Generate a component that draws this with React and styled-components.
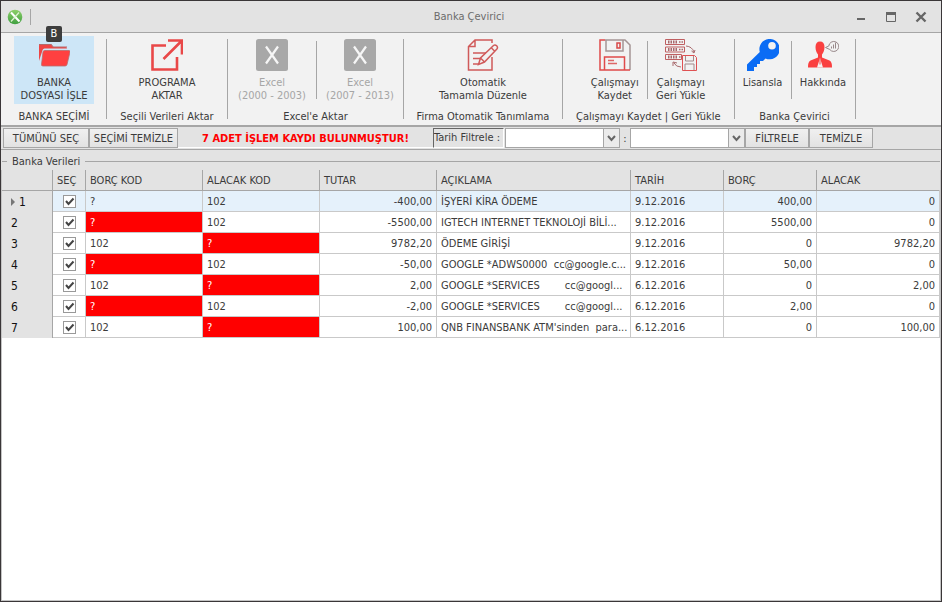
import React from 'react';
import styled, {createGlobalStyle} from 'styled-components';

const colors = {
    frame: '#3a3638',
    chrome: '#e3e3e3',
    ribbon: '#f2f2f2',
    line: '#a6a6a6',
    cell: '#c9c9c9',
    text: '#3b3b3b',
    muted: '#a6a6a6',
    red: '#ff0000',
    selected: '#e5f1fb',
};

const GlobalStyle = createGlobalStyle`
    *, *::before, *::after {
        box-sizing: border-box;
    }

    body {
        margin: 0;
        color: ${colors.text};
        font: 11px/13px 'DejaVu Sans Condensed', 'Noto Sans', sans-serif;
    }

    button, select {
        margin: 0;
        padding: 0;
        color: inherit;
        font: inherit;
    }
`;

const Window = styled.div`
    display: flex;
    flex-direction: column;
    min-height: 100vh;
    background: #fff;
    border: 1px solid ${colors.frame};
`;

const TitleBar = styled.header`
    display: grid;
    grid-template-columns: 1fr auto 1fr;
    align-items: center;
    height: 32px;
    padding: 0 10px 0 6px;
    background: ${colors.chrome};
    border-bottom: 1px solid ${colors.line};
`;

const QuickAccess = styled.div`
    display: flex;
    align-items: center;
    width: 24px;
    height: 16px;
    border-right: 1px solid ${colors.line};
`;

const Title = styled.h1`
    margin: 0;
    color: #6c6c6c;
    font-size: 11px;
    font-weight: normal;
`;

const WindowButtons = styled.div`
    display: flex;
    justify-content: flex-end;
    gap: 18px;
    padding-right: 4px;
`;

const WindowButton = styled.button`
    display: flex;
    width: 12px;
    height: 12px;
    background: none;
    border: 0;
    color: #666;
`;

const Ribbon = styled.nav`
    display: flex;
    height: 94px;
    padding-left: 1px;
    background: ${colors.ribbon};
    border-bottom: 2px solid ${colors.line};
`;

const Group = styled.section`
    display: flex;
    flex-direction: column;
    justify-content: space-between;
    align-items: center;
    padding: 3px ${props => props.$pad || '0'} 2px;
`;

const GroupItems = styled.div`
    display: flex;
`;

const GroupTitle = styled.h2`
    margin: 0;
    font-size: 11px;
    font-weight: normal;
    white-space: nowrap;
`;

const Divider = styled.div`
    width: 1px;
    height: ${props => props.$height};
    margin-top: ${props => props.$top};
    background: ${colors.line};
`;

const RibbonButton = styled.button`
    position: relative;
    display: flex;
    flex-direction: column;
    align-items: center;
    gap: 5px;
    width: ${props => props.$width};
    height: 68px;
    padding-top: 3px;
    background: ${props => props.$active ? '#cde6f7' : 'none'};
    border: 0;
    white-space: pre-line;

    &:disabled {
        color: ${colors.muted};
    }
`;

const KeyTip = styled.kbd`
    position: absolute;
    top: -10px;
    left: 32px;
    width: 16px;
    height: 16px;
    background: #3d3d3d;
    border-radius: 2px;
    color: #fff;
    font: 11px/16px 'DejaVu Sans Condensed', 'Noto Sans', sans-serif;
    text-align: center;
`;

const Toolbar = styled.div`
    display: flex;
    align-items: center;
    height: 23px;
    padding-left: 2px;
    background: ${colors.chrome};
    border-bottom: 1px solid ${colors.line};
`;

const ToolButton = styled.button`
    width: ${props => props.$width};
    height: 20px;
    background: linear-gradient(#f0f0f0, #e2e2e2);
    border: 1px solid ${colors.line};
    white-space: nowrap;
`;

const Status = styled.output`
    width: 255px;
    height: 20px;
    padding-top: 1px;
    border-bottom: 1px solid #fff;
    color: ${colors.red};
    font-weight: bold;
    line-height: 19px;
    text-align: center;
    white-space: nowrap;
`;

const FilterLabel = styled.label`
    width: 71px;
    height: 20px;
    margin-right: 1px;
    border: 1px solid;
    border-color: #666 #fff #fff #666;
    line-height: 18px;
    white-space: nowrap;
`;

const Combo = styled.div`
    display: grid;
    grid-template-columns: 1fr 16px;
    width: 115px;
    height: 20px;
    border: 1px solid ${colors.line};
`;

const Select = styled.select`
    grid-area: 1 / 1 / 2 / 3;
    width: 100%;
    height: 18px;
    appearance: none;
    background: #fff;
    border: 0;
    border-radius: 0;
`;

const ComboArrow = styled.span`
    grid-area: 1 / 2;
    display: grid;
    place-items: center;
    background: #ebebeb;
    border-left: 1px solid ${colors.line};
    pointer-events: none;
`;

const Colon = styled.span`
    width: 10px;
    text-align: center;
`;

const Panel = styled.main`
    flex: 1;
    border: 1px solid #c4c4c4;
    border-top: 0;
`;

const PanelHead = styled.div`
    display: flex;
    align-items: center;
    gap: 5px;
    height: 20px;
    margin: 0 -1px;
    padding: 2px 1px 0;
    background: ${colors.chrome};

    &::before, &::after {
        content: '';
        width: 5px;
        height: 1px;
        background: ${colors.line};
    }

    &::after {
        flex: 1;
    }
`;

const PanelTitle = styled.h2`
    margin: 0;
    font-size: 11px;
    font-weight: normal;
`;

const Table = styled.table`
    width: 100%;
    table-layout: fixed;
    border-collapse: separate;
    border-spacing: 0;
`;

const Th = styled.th`
    width: ${props => props.$width};
    height: 21px;
    padding: 0 4px;
    background: ${colors.chrome};
    border-right: 1px solid ${colors.line};
    border-bottom: 1px solid ${colors.line};
    font-weight: normal;
    text-align: left;

    &:last-child {
        border-right-color: ${colors.chrome};
    }
`;

const RowNumber = styled.th`
    padding: 2px 0 0 9px;
    background: ${colors.chrome};
    border-right: 1px solid ${colors.line};
    color: #111;
    font-size: 12px;
    font-weight: normal;
    text-align: left;
`;

const RowMarker = styled.svg`
    margin-right: 4px;
`;

const Td = styled.td`
    height: 21px;
    padding: 0 ${props => props.$number ? '4px' : '0'} 0 4px;
    overflow: hidden;
    background: ${props => props.$missing ? colors.red : 'transparent'};
    border-right: 1px solid ${colors.cell};
    border-bottom: 1px solid ${colors.cell};
    color: ${props => props.$missing ? '#fff' : 'inherit'};
    text-align: ${props => props.$number ? 'right' : 'left'};
    white-space: pre;
`;

const Row = styled.tr`
    background: ${props => props.$selected ? colors.selected : '#fff'};
`;

const CheckBox = styled.span`
    display: grid;
    width: 13px;
    height: 13px;
    margin-left: 6px;

    input, svg {
        grid-area: 1 / 1;
        width: 13px;
        height: 13px;
        margin: 0;
    }

    input {
        appearance: none;
        background: #fff;
        border: 1px solid #999;
    }

    svg {
        display: none;
        pointer-events: none;
    }

    input:checked + svg {
        display: block;
    }
`;

const LogoIcon = () =>
    <svg width="16" height="16" viewBox="0 0 16 16">
        <defs>
            <linearGradient id="logo" x1="0" y1="0" x2="0" y2="1">
                <stop offset="0" stopColor="#8ed06a" />
                <stop offset="1" stopColor="#3f9f40" />
            </linearGradient>
        </defs>
        <circle cx="8" cy="8" r="7.3" fill="url(#logo)" />
        <path d="M4 3.500l8.500 9" stroke="#fff" strokeWidth="2" />
        <path d="M12 3.500L4 12.500" stroke="#dff2d5" strokeWidth="1.200" />
    </svg>;

const FolderIcon = () =>
    <svg width="32" height="32" viewBox="0 0 32 32">
        <path d="M1 22V6.500Q1 5 2.500 5H12q1.500 0 2 1.500T16 8h11.500Q29 8 29 9.500H6.500Q5 9.500 4.600 11z" fill="#ee4545" />
        <path d="M1 5.500h12.500L15 8h14" fill="none" stroke="#b3696a" />
        <path d="M6.500 11.500H31q1.200 0 1 1.500l-3 12.500q-.4 1.500-2 1.500H5q-1.800 0-1.500-1.500L5 13q.3-1.500 1.500-1.500z" fill="#ff4040" stroke="#b96c6c" strokeWidth=".8" />
    </svg>;

const ExportIcon = () =>
    <svg width="32" height="32" viewBox="0 0 32 32" fill="none" stroke="#e94848" strokeWidth="2.600">
        <path d="M15 6.500H1.500v24H26V18" />
        <path d="M12.500 20L30 2.500M17 1.500h14v14" />
    </svg>;

const ExcelIcon = () =>
    <svg width="32" height="32" viewBox="0 0 32 32">
        <rect width="32" height="32" rx="2.500" fill="#a8a8a8" />
        <path d="M10 7.500l12 17M22 7.500l-12 17" fill="none" stroke="#f6f6f6" strokeWidth="2.200" />
    </svg>;

const EditIcon = () =>
    <svg width="32" height="32" viewBox="0 0 32 32" fill="none" stroke="#d05a5a" strokeWidth="1.500">
        <path d="M25 4V1H8L1.500 7.500V31H25V18M8 1v6.500H1.500" />
        <path d="M6 14h13M6 19.500h8M6 25h6" />
        <path d="M11.500 25.500l2-6.500L26.500 6.500q1.500-1.200 3.200.3 1.500 1.700.2 3.200L17.500 23zM24 8.500l4 4M13.500 19l4 4" />
    </svg>;

const SaveIcon = () =>
    <svg width="32" height="32" viewBox="0 0 32 32" fill="none" stroke="#a59595" strokeWidth="1.500">
        <path d="M31 31V6L26 1H6" />
        <path d="M6 1H1v30h30" stroke="#e04a4a" />
        <path d="M7 1v11h17V1" />
        <path d="M18 4h3v5h-3z" stroke="#d84848" />
        <path d="M5.500 31V18h20v13" stroke="#e04a4a" />
        <path d="M9 21.500h6M9 24.500h9" stroke="#d66" />
    </svg>;

const RestoreIcon = () =>
    <svg width="32" height="32" viewBox="0 0 32 32" fill="none" stroke="#a8696c">
        <path d="M.5.500h19v5H.5zM.5 8h19v5H.5zM.5 15.500h16v5H.5z" stroke="#bf5f61" />
        <path d="M3 3h9M3 10.500h9M3 18h9" strokeWidth="3" strokeDasharray="1.500 1" />
        <path d="M14 3h4M14 10.500h4M14 18h3" strokeWidth="1.500" strokeDasharray="1.500 1" />
        <path d="M21 7q6 .5 8 6M26.500 12l2.500 2 1-3M16 28q-5 0-7-4M8 27v-4l4 1" />
        <path d="M17.500 31.500v-15h12l2 2v13z" stroke="#df5152" />
        <path d="M20.500 17v5h8v-5M20 31v-6h9v6" stroke="#a38a8a" />
    </svg>;

const KeyIcon = () =>
    <svg width="32" height="32" viewBox="0 0 32 32">
        <path d="M21.500 0A10.200 10.200 0 1 1 18.500 19.500L16 22h-3v3h-3v3H7v4H0V25.500L12.800 13A10.200 10.200 0 0 1 21.500 0z" fill="#0a6cf5" />
        <circle cx="25" cy="6.800" r="3.800" fill="#f2f2f2" />
    </svg>;

const AboutIcon = () =>
    <svg width="32" height="32" viewBox="0 0 32 32">
        <path d="M13 2.500c3 0 4.500 2 4.500 5.500 0 3-1 5.500-2.500 7.500v3l7.500 3c2 1 2.500 3 2.500 7H1c0-4 .5-6 2.500-7l7.500-3v-3C9.500 13.500 8.500 11 8.500 8c0-3.500 1.500-5.500 4.500-5.500z" fill="#fa4040" />
        <path d="M13 19l-3 9.500h6z" fill="#f2f2f2" />
        <path d="M13 19.500v6" stroke="#fa6060" strokeWidth="1.200" />
        <path d="M18.500 8.500l3.300-1.500a5 5 0 1 1 1 3.500z" fill="#f2f2f2" stroke="#98888a" />
        <path d="M24.500 9.500v-2M26.500 9.500v-4M28.500 9.500v-6" stroke="#98888a" />
    </svg>;

const ribbonGroups = [
    {title: 'BANKA SEÇİMİ', pad: '12px', items: [
        {label: 'BANKA\nDOSYASI İŞLE', icon: FolderIcon, width: '80px', keyTip: 'B', active: true},
    ]},
    {title: 'Seçili Verileri Aktar', pad: '12px', items: [
        {label: 'PROGRAMA\nAKTAR', icon: ExportIcon, width: '96px'},
    ]},
    {title: 'Excel\'e Aktar', items: [
        {label: 'Excel\n(2000 - 2003)', icon: ExcelIcon, width: '88px', disabled: true},
        {label: 'Excel\n(2007 - 2013)', icon: ExcelIcon, width: '86px', disabled: true},
    ]},
    {title: 'Firma Otomatik Tanımlama', pad: '12px', items: [
        {label: 'Otomatik\nTamamla Düzenle', icon: EditIcon, width: '134px'},
    ]},
    {title: 'Çalışmayı Kaydet | Geri Yükle', pad: '13px', items: [
        {label: 'Çalışmayı\nKaydet', icon: SaveIcon, width: '64px'},
        {label: 'Çalışmayı\nGeri Yükle', icon: RestoreIcon, width: '66px'},
    ]},
    {title: 'Banka Çevirici', items: [
        {label: 'Lisansla', icon: KeyIcon, width: '56px'},
        {label: 'Hakkında', icon: AboutIcon, width: '63px'},
    ]},
];

const columns = [
    {label: 'SEÇ', width: '33px'},
    {label: 'BORÇ KOD', width: '117px'},
    {label: 'ALACAK KOD', width: '117px'},
    {label: 'TUTAR', width: '117px'},
    {label: 'AÇIKLAMA'},
    {label: 'TARİH', width: '93px'},
    {label: 'BORÇ', width: '93px'},
    {label: 'ALACAK', width: '123px'},
];

const records = [
    ['?', '102', '-400,00', 'İŞYERİ KİRA ÖDEME', '9.12.2016', '400,00', '0'],
    ['?', '102', '-5500,00', 'IGTECH INTERNET TEKNOLOJİ BİLİ...', '9.12.2016', '5500,00', '0'],
    ['102', '?', '9782,20', 'ÖDEME GİRİŞİ', '9.12.2016', '0', '9782,20'],
    ['?', '102', '-50,00', 'GOOGLE *ADWS0000  cc@google.c...', '9.12.2016', '50,00', '0'],
    ['102', '?', '2,00', 'GOOGLE *SERVICES        cc@googl...', '6.12.2016', '0', '2,00'],
    ['?', '102', '-2,00', 'GOOGLE *SERVICES        cc@googl...', '6.12.2016', '2,00', '0'],
    ['102', '?', '100,00', 'QNB FINANSBANK ATM\'sinden  para...', '6.12.2016', '0', '100,00'],
];

const RibbonItem = ({item}) => {
    const Icon = item.icon;

    return (
        <RibbonButton type="button" $width={item.width} $active={item.active} disabled={item.disabled}>
            {item.keyTip && <KeyTip>{item.keyTip}</KeyTip>}
            <Icon />
            <span>{item.label}</span>
        </RibbonButton>
    );
};

const DateCombo = ({id, label}) =>
    <Combo>
        <Select id={id} aria-label={label}>
            <option value="" />
        </Select>
        <ComboArrow>
            <svg width="9" height="7" viewBox="0 0 9 7" fill="none" stroke="#666" strokeWidth="2">
                <path d="M1 1l3.500 4L8 1" />
            </svg>
        </ComboArrow>
    </Combo>;

const Record = ({record, index}) => {
    const [debit, credit, amount, description, date, debt, due] = record;
    const selected = index === 0;

    return (
        <Row $selected={selected}>
            <RowNumber scope="row">
                {selected &&
                    <RowMarker width="4" height="8" viewBox="0 0 4 8">
                        <path d="M0 0l4 4-4 4z" fill="#777" />
                    </RowMarker>
                }
                {index + 1}
            </RowNumber>
            <Td>
                <CheckBox>
                    <input type="checkbox" defaultChecked aria-label={`SEÇ ${index + 1}`} />
                    <svg viewBox="0 0 13 13" fill="none" stroke="#444" strokeWidth="2">
                        <path d="M3 6l2.500 3L10.500 3.500" />
                    </svg>
                </CheckBox>
            </Td>
            <Td $missing={debit === '?' && !selected}>{debit}</Td>
            <Td $missing={credit === '?'}>{credit}</Td>
            <Td $number>{amount}</Td>
            <Td>{description}</Td>
            <Td>{date}</Td>
            <Td $number>{debt}</Td>
            <Td $number>{due}</Td>
        </Row>
    );
};

const App = () =>
    <Window>
        <GlobalStyle />
        <TitleBar>
            <QuickAccess><LogoIcon /></QuickAccess>
            <Title>Banka Çevirici</Title>
            <WindowButtons>
                <WindowButton type="button" aria-label="Minimize">
                    <svg width="12" height="12"><path d="M2 8h8" stroke="currentColor" strokeWidth="2" /></svg>
                </WindowButton>
                <WindowButton type="button" aria-label="Maximize">
                    <svg width="12" height="12" fill="none" stroke="currentColor">
                        <path d="M1.500 1.500h9v9h-9z" />
                        <path d="M1 2.500h10" strokeWidth="3" />
                    </svg>
                </WindowButton>
                <WindowButton type="button" aria-label="Close">
                    <svg width="12" height="12"><path d="M1.500 1.500l9 9M10.500 1.500l-9 9" stroke="currentColor" strokeWidth="2.400" /></svg>
                </WindowButton>
            </WindowButtons>
        </TitleBar>
        <Ribbon>
            {ribbonGroups.map(group =>
                <React.Fragment key={group.title}>
                    <Group $pad={group.pad}>
                        <GroupItems>
                            {group.items.map((item, index) =>
                                <React.Fragment key={item.label}>
                                    {index > 0 && <Divider $height="58px" $top="5px" />}
                                    <RibbonItem item={item} />
                                </React.Fragment>
                            )}
                        </GroupItems>
                        <GroupTitle>{group.title}</GroupTitle>
                    </Group>
                    <Divider $height="80px" $top="6px" />
                </React.Fragment>
            )}
        </Ribbon>
        <Toolbar>
            <ToolButton type="button" $width="86px">TÜMÜNÜ SEÇ</ToolButton>
            <ToolButton type="button" $width="89px">SEÇİMİ TEMİZLE</ToolButton>
            <Status>7 ADET İŞLEM KAYDI BULUNMUŞTUR!</Status>
            <FilterLabel htmlFor="date-from">Tarih Filtrele :</FilterLabel>
            <DateCombo id="date-from" />
            <Colon>:</Colon>
            <DateCombo id="date-to" label="Tarih Filtrele" />
            <ToolButton type="button" $width="64px">FİLTRELE</ToolButton>
            <ToolButton type="button" $width="64px">TEMİZLE</ToolButton>
        </Toolbar>
        <Panel>
            <PanelHead><PanelTitle>Banka Verileri</PanelTitle></PanelHead>
            <Table>
                <thead>
                    <tr>
                        <Th $width="51px" />
                        {columns.map(column =>
                            <Th key={column.label} scope="col" $width={column.width}>{column.label}</Th>
                        )}
                    </tr>
                </thead>
                <tbody>
                    {records.map((record, index) => <Record key={index} record={record} index={index} />)}
                </tbody>
            </Table>
        </Panel>
    </Window>;

export default App;
